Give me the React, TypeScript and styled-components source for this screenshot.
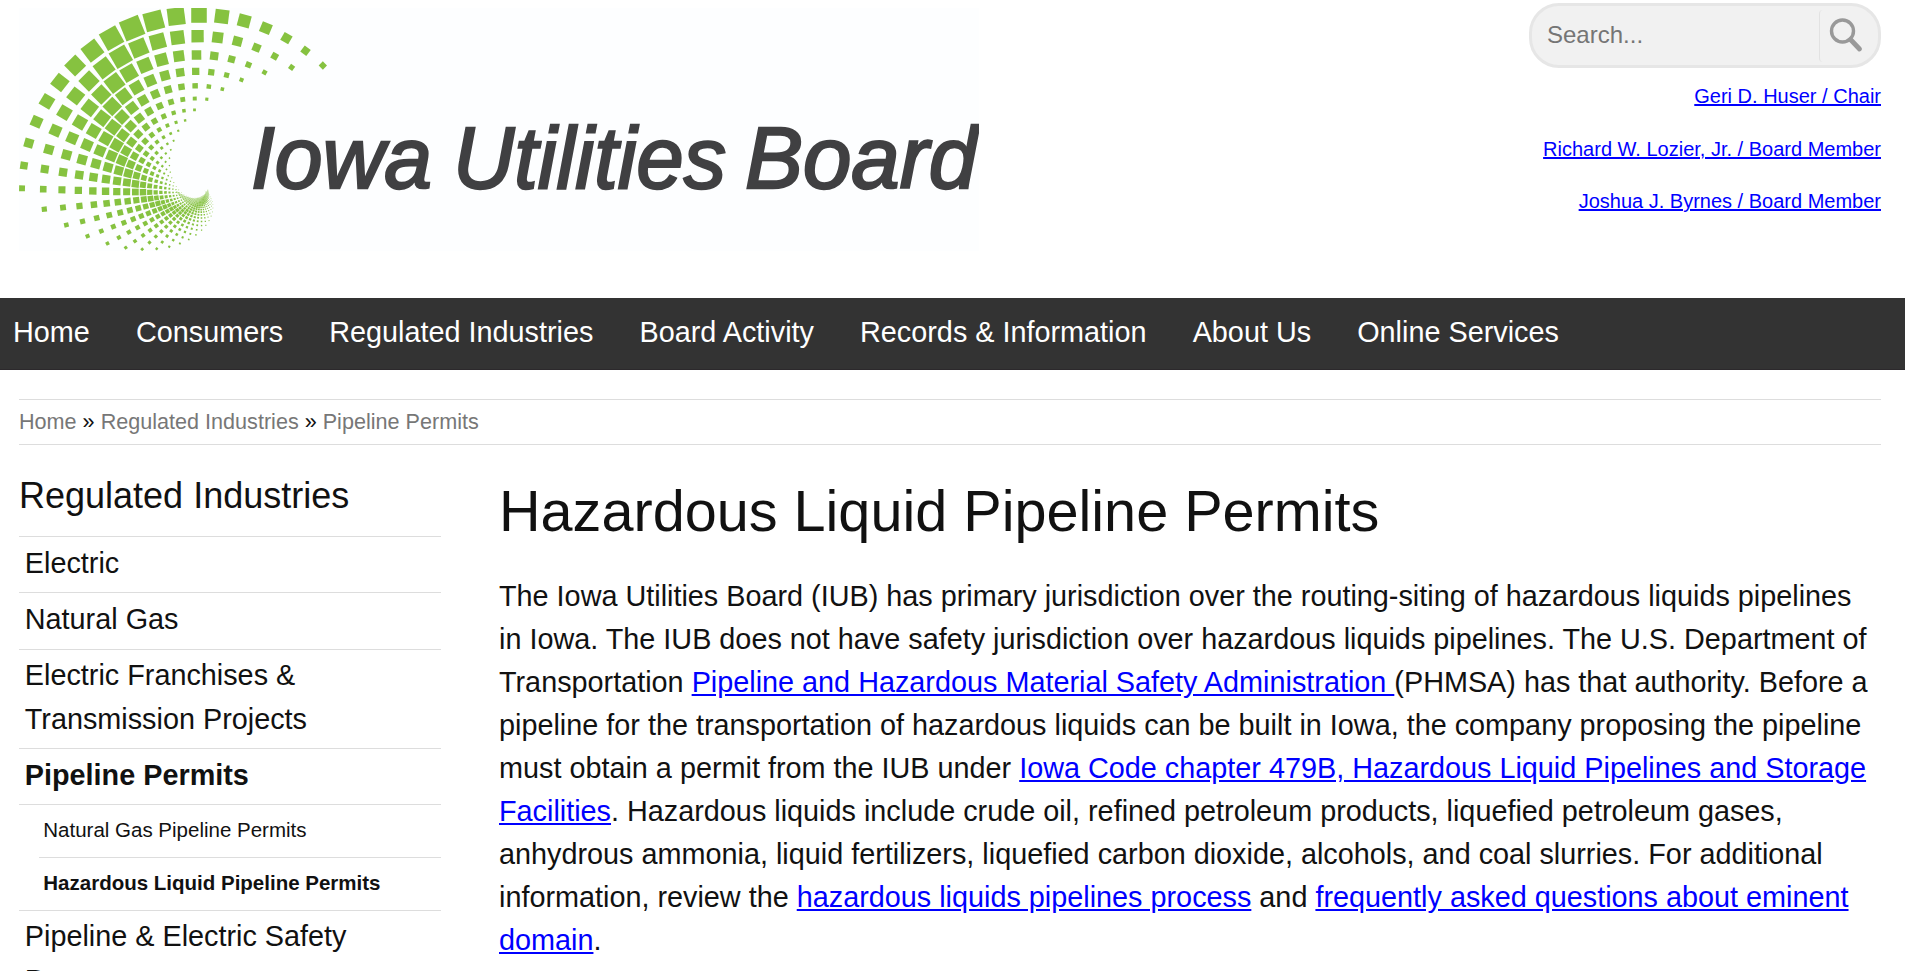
import React from "react";
import styled, { createGlobalStyle } from "styled-components";

const GlobalStyle = createGlobalStyle`
  * {
    box-sizing: border-box;
  }

  html,
  body {
    margin: 0;
    height: 971px;
    overflow: hidden;
  }

  body {
    background: #fff;
    color: #111;
    font-family: "Liberation Sans", Arial, sans-serif;
    font-size: 28.8px;
    line-height: 43px;
  }

  a {
    color: #0000ff;
  }
`;

const Header = styled.header`
  display: flex;
  justify-content: space-between;
  height: 298px;
  padding: 0 24px 0 19px;
`;

const LogoImage = styled.svg`
  display: block;
  width: 960px;
  height: 243px;
  margin-top: 8px;
  background: #fdfeff;
  font-family: "Liberation Sans", Arial, sans-serif;
`;

const HeaderSide = styled.div`
  display: flex;
  flex-direction: column;
  align-items: flex-end;
  padding-top: 3px;
`;

const SearchBox = styled.form`
  display: flex;
  align-items: center;
  width: 352px;
  height: 65px;
  padding-left: 15px;
  background: #f1f1f1;
  border: 3px solid #e6e6e6;
  border-radius: 30px;
`;

const SearchInput = styled.input`
  flex: 1;
  min-width: 0;
  height: 40px;
  padding: 0 0 1px;
  border: 0;
  outline: 0;
  background: transparent;
  font-family: inherit;
  font-size: 24px;

  &::placeholder {
    color: #757575;
  }
`;

const SearchButton = styled.button`
  width: 59px;
  height: 52px;
  padding: 0;
  border: 0;
  border-left: 1px solid #e2e2e2;
  border-radius: 4px;
  background: transparent;

  svg {
    display: block;
  }
`;

const MemberList = styled.ul`
  display: flex;
  flex-direction: column;
  align-items: flex-end;
  gap: 22.3px;
  margin: 13px 0 0;
  padding: 0;
  list-style: none;
  font-size: 20px;
  line-height: 30.3px;
`;

const NavBar = styled.nav`
  display: flex;
  gap: 46.1px;
  height: 72px;
  padding: 13px 0 0 13px;
  background: #333;
  border-bottom: 1px solid #2c292c;

  a {
    color: #fff;
    text-decoration: none;
  }
`;

const Breadcrumb = styled.div`
  height: 46px;
  margin: 29px 24px 0 19px;
  border-top: 1px solid #ddd;
  border-bottom: 1px solid #ddd;
  font-size: 21.6px;
  line-height: 44px;

  a {
    color: #777;
    text-decoration: none;
  }
`;

const Columns = styled.div`
  display: grid;
  grid-template-columns: 422px 1fr;
  column-gap: 58px;
  padding: 0 24px 0 19px;
`;

const Sidebar = styled.aside`
  padding-top: 24px;
`;

const SidebarTitle = styled.h2`
  margin: 0;
  height: 67.4px;
  font-size: 36px;
  font-weight: 400;
  line-height: 54px;
`;

const SideList = styled.ul`
  margin: 0;
  padding: 0;
  list-style: none;
`;

const SideLink = styled.a<{ $active?: boolean }>`
  display: block;
  padding: 4.9px 5.8px 7px;
  border-top: 1px solid #ddd;
  color: #111;
  font-weight: ${(p) => (p.$active ? 700 : 400)};
  line-height: 43.2px;
  text-decoration: none;
`;

const SubList = styled(SideList)`
  font-size: 20.5px;

  li + li {
    margin-left: 20px;
  }

  li:first-child a {
    padding-left: 24.3px;
  }
`;

const SubLink = styled(SideLink)`
  padding: 9.8px 4.3px 12px;
  line-height: 30px;
`;

const Main = styled.main`
  padding-top: 23px;
`;

const PageTitle = styled.h1`
  margin: 0;
  font-size: 57.6px;
  font-weight: 400;
  line-height: 86px;
`;

const Paragraph = styled.p`
  margin: 21px 0 0;
`;

type Tile = {
  x: number;
  y: number;
  size: number;
  angle: number;
};

const RINGS = 27;
const TILES_PER_RING = 19;
const STEP = 7.4;

// Each ring is a scaled copy of the previous one, started one step further round
const buildTiles = (): Tile[] => {
  const tiles: Tile[] = [];

  for (let ring = 0; ring < RINGS; ring++) {
    const radius = 177 * Math.pow(0.88, ring);
    const skew = 0.0065 * ring;

    for (let i = 0; i < TILES_PER_RING; i++) {
      const degrees = (ring + i - 6) * STEP + ring * 0.15;
      const rad = (degrees * Math.PI) / 180;
      const fill = 0.9 - (Math.abs(i - 9) / 9) * 0.64;

      tiles.push({
        x: 180 - radius * Math.sin(rad) - skew * radius * Math.cos(rad),
        y: 184 - radius * Math.cos(rad),
        size: radius * 0.128 * fill,
        angle: -degrees,
      });
    }
  }

  return tiles;
};

const tiles = buildTiles();

const Logo: React.FC = () => (
  <LogoImage viewBox="0 0 960 243" role="img" aria-label="Iowa Utilities Board">
    <g fill="#86c240">
      {tiles.map((t, i) => (
        <rect
          key={i}
          x={-t.size / 2}
          y={-t.size / 2}
          width={t.size}
          height={t.size}
          transform={`translate(${t.x} ${t.y}) rotate(${t.angle})`}
        />
      ))}
      <path
        d="M156 182Q167 190 176 190.5Q186 189 189 181Q192 190 186 196Q172 205 156 182Z"
        opacity="0.45"
      />
    </g>
    <g
      fill="#404042"
      stroke="#404042"
      strokeWidth="2.4"
      fontSize="87.5"
      fontStyle="italic"
    >
      <text x="232" y="179.5" textLength="181" lengthAdjust="spacingAndGlyphs">
        Iowa
      </text>
      <text x="434" y="179.5" textLength="273" lengthAdjust="spacingAndGlyphs">
        Utilities
      </text>
      <text x="726" y="179.5" textLength="232" lengthAdjust="spacingAndGlyphs">
        Board
      </text>
    </g>
  </LogoImage>
);

const members = [
  "Geri D. Huser / Chair",
  "Richard W. Lozier, Jr. / Board Member",
  "Joshua J. Byrnes / Board Member",
];

const navItems = [
  "Home",
  "Consumers",
  "Regulated Industries",
  "Board Activity",
  "Records & Information",
  "About Us",
  "Online Services",
];

const App: React.FC = () => {
  return (
    <>
      <GlobalStyle />
      <Header>
        <Logo />
        <HeaderSide>
          <SearchBox>
            <SearchInput type="text" placeholder="Search..." />
            <SearchButton type="button" aria-label="Search">
              <svg width="50" height="52" viewBox="0 0 50 52" fill="none">
                <circle cx="22.5" cy="21" r="11" stroke="#999" strokeWidth="3.4" />
                <path
                  d="M30.5 29.5L39.5 39"
                  stroke="#999"
                  strokeWidth="4.8"
                  strokeLinecap="round"
                />
              </svg>
            </SearchButton>
          </SearchBox>
          <MemberList>
            {members.map((name) => (
              <li key={name}>
                <a href="#">{name}</a>
              </li>
            ))}
          </MemberList>
        </HeaderSide>
      </Header>

      <NavBar>
        {navItems.map((item) => (
          <a key={item} href="#">
            {item}
          </a>
        ))}
      </NavBar>

      <Breadcrumb>
        <a href="#">Home</a> » <a href="#">Regulated Industries</a> »{" "}
        <a href="#">Pipeline Permits</a>
      </Breadcrumb>

      <Columns>
        <Sidebar>
          <SidebarTitle>Regulated Industries</SidebarTitle>
          <SideList>
            <li>
              <SideLink href="#">Electric</SideLink>
            </li>
            <li>
              <SideLink href="#">Natural Gas</SideLink>
            </li>
            <li>
              <SideLink href="#">
                Electric Franchises &amp; Transmission Projects
              </SideLink>
            </li>
            <li>
              <SideLink href="#" $active>
                Pipeline Permits
              </SideLink>
              <SubList>
                <li>
                  <SubLink href="#">Natural Gas Pipeline Permits</SubLink>
                </li>
                <li>
                  <SubLink href="#" $active>
                    Hazardous Liquid Pipeline Permits
                  </SubLink>
                </li>
              </SubList>
            </li>
            <li>
              <SideLink href="#">
                Pipeline &amp; Electric Safety
                <br />
                Program
              </SideLink>
            </li>
          </SideList>
        </Sidebar>

        <Main>
          <PageTitle>Hazardous Liquid Pipeline Permits</PageTitle>
          <Paragraph>
            The Iowa Utilities Board (IUB) has primary jurisdiction over the
            routing-siting of hazardous liquids pipelines in Iowa. The IUB does
            not have safety jurisdiction over hazardous liquids pipelines. The
            U.S. Department of Transportation{" "}
            <a href="#">Pipeline and Hazardous Material Safety Administration </a>
            (PHMSA) has that authority. Before a pipeline for the transportation
            of hazardous liquids can be built in Iowa, the company proposing the
            pipeline must obtain a permit from the IUB under{" "}
            <a href="#">
              Iowa Code chapter 479B, Hazardous Liquid Pipelines and Storage
              Facilities
            </a>
            . Hazardous liquids include crude oil, refined petroleum products,
            liquefied petroleum gases, anhydrous ammonia, liquid fertilizers,
            liquefied carbon dioxide, alcohols, and coal slurries. For additional
            information, review the{" "}
            <a href="#">hazardous liquids pipelines process</a> and{" "}
            <a href="#">frequently asked questions about eminent domain</a>.
          </Paragraph>
        </Main>
      </Columns>
    </>
  );
};

export default App;
